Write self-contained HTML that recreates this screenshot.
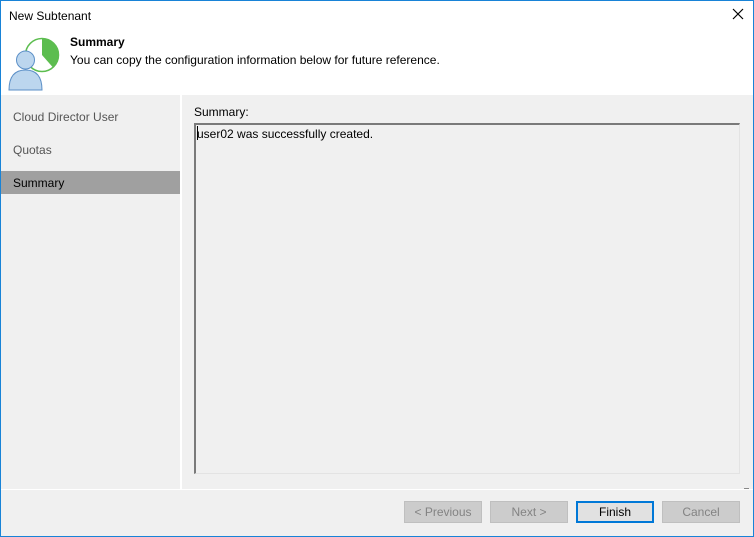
<!DOCTYPE html>
<html><head><meta charset="utf-8"><style>
*{margin:0;padding:0;box-sizing:border-box}
body{width:754px;height:537px;overflow:hidden;font-family:"Liberation Sans",Tahoma,sans-serif;font-size:12px;color:#000;background:#fff}
.win{position:absolute;left:0;top:0;width:754px;height:537px;background:#f0f0f0}
.abs{position:absolute}
</style></head><body>
<div class="win">
 <div class="abs" style="left:0;top:0;width:754px;height:95px;background:#fff"></div>
 <div class="abs" style="left:9px;top:9px;font-size:12px">New Subtenant</div>
 <svg class="abs" style="left:732px;top:8px" width="12" height="12"><path d="M1 1L11 11M11 1L1 11" stroke="#000" stroke-width="1.2"/></svg>
 <svg class="abs" style="left:8px;top:37px" width="56" height="56">
  <circle cx="34" cy="18" r="16.5" fill="#fff" stroke="#5cbd4f" stroke-width="1.5"/>
  <path d="M34 18 L34 1.5 A16.5 16.5 0 0 1 45 30.5 Z" fill="#5cbd4f"/>
  <path d="M1 53 Q1 33 17.5 33 Q34 33 34 53 Z" fill="#bcd6ee" stroke="#5b8fc7" stroke-width="1"/>
  <circle cx="17.5" cy="23" r="9" fill="#bcd6ee" stroke="#5b8fc7" stroke-width="1"/>
 </svg>
 <div class="abs" style="left:70px;top:35px;font-weight:bold">Summary</div>
 <div class="abs" style="left:70px;top:53px">You can copy the configuration information below for future reference.</div>
 <div class="abs" style="left:180px;top:95px;width:2px;height:394px;background:#fff"></div>
 <div class="abs" style="left:13px;top:110px;color:#555">Cloud Director User</div>
 <div class="abs" style="left:13px;top:143px;color:#555">Quotas</div>
 <div class="abs" style="left:1px;top:171px;width:179px;height:23px;background:#a0a0a0"></div>
 <div class="abs" style="left:13px;top:176px;color:#000">Summary</div>
 <div class="abs" style="left:194px;top:105px">Summary:</div>
 <div class="abs" style="left:194px;top:123px;width:546px;height:351px;border:1px solid #e3e3e3;border-top:2px solid #7a7a7a;border-left:2px solid #7a7a7a;background:#f0f0f0"></div>
 <div class="abs" style="left:197px;top:127px">user02 was successfully created.</div>
 <div class="abs" style="left:197px;top:126px;width:1px;height:14px;background:#000"></div>
 <div class="abs" style="left:0;top:489px;width:754px;height:1px;background:#fff"></div>
 <div class="abs" style="left:744px;top:488px;width:5px;height:1px;background:#888"></div>
 <div class="abs" style="left:404px;top:501px;width:78px;height:22px;border:1px solid #bfbfbf;background:#cccccc;color:#838383;text-align:center;line-height:20px">&lt; Previous</div>
 <div class="abs" style="left:490px;top:501px;width:78px;height:22px;border:1px solid #bfbfbf;background:#cccccc;color:#838383;text-align:center;line-height:20px">Next &gt;</div>
 <div class="abs" style="left:576px;top:501px;width:78px;height:22px;border:2px solid #0078d7;background:#e1e1e1;text-align:center;line-height:18px">Finish</div>
 <div class="abs" style="left:662px;top:501px;width:78px;height:22px;border:1px solid #bfbfbf;background:#cccccc;color:#838383;text-align:center;line-height:20px">Cancel</div>
 <div class="abs" style="left:0;top:0;width:754px;height:537px;border:1px solid #1883d7"></div>
</div>
</body></html>
